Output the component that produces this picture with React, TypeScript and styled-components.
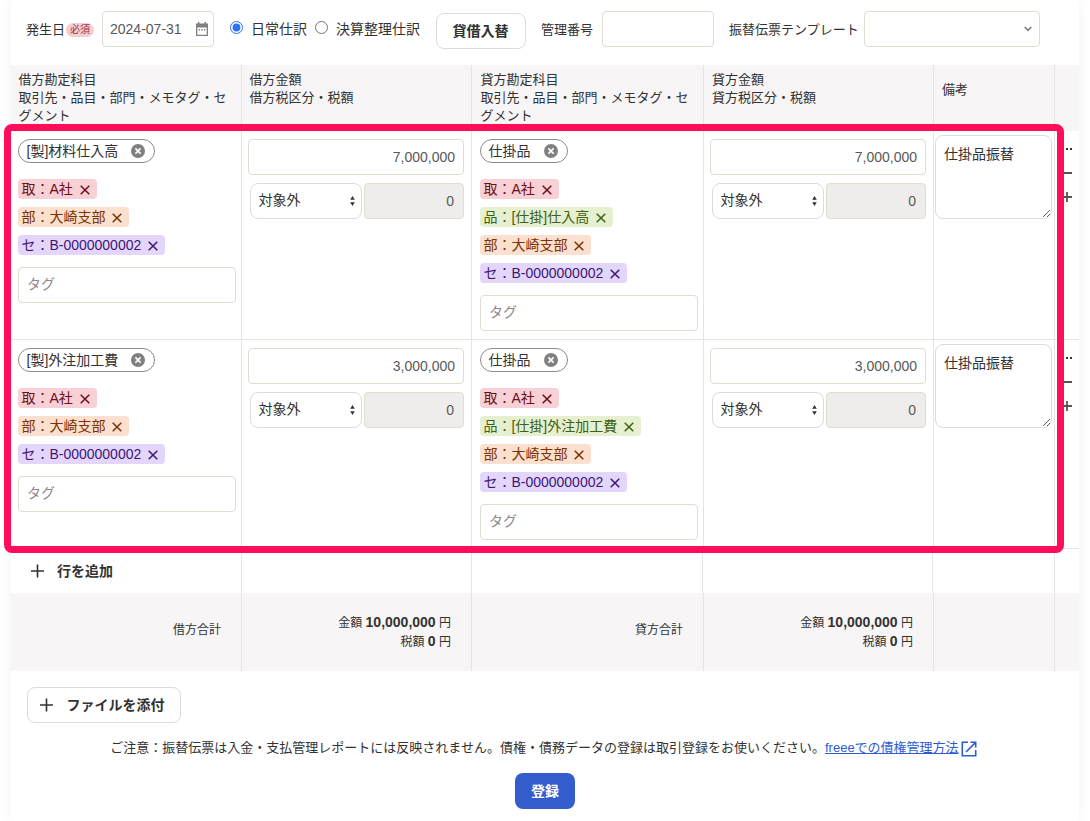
import React, { FunctionComponent, useState } from 'react';
import styled, { createGlobalStyle } from 'styled-components';

type TagKind = 'partner' | 'item' | 'section' | 'segment';
type TagData = { kind: TagKind; label: string };
type SideData = { account: string; amount: string; tags: TagData[] };
type RowData = { id: number; debit: SideData; credit: SideData; note: string };

const tagColors: Record<TagKind, { bg: string; fg: string }> = {
  partner: { bg: '#f7d1d5', fg: '#6d0f1b' },
  item: { bg: '#e6f0d1', fg: '#3f6110' },
  section: { bg: '#fce0cf', fg: '#7c3300' },
  segment: { bg: '#e4d6fb', fg: '#3b1777' },
};

const partner: TagData = { kind: 'partner', label: '取：A社' };
const section: TagData = { kind: 'section', label: '部：大崎支部' };
const segment: TagData = { kind: 'segment', label: 'セ：B-0000000002' };

const rows: RowData[] = [
  {
    id: 1,
    debit: { account: '[製]材料仕入高', amount: '7,000,000', tags: [partner, section, segment] },
    credit: {
      account: '仕掛品',
      amount: '7,000,000',
      tags: [partner, { kind: 'item', label: '品：[仕掛]仕入高' }, section, segment],
    },
    note: '仕掛品振替',
  },
  {
    id: 2,
    debit: { account: '[製]外注加工費', amount: '3,000,000', tags: [partner, section, segment] },
    credit: {
      account: '仕掛品',
      amount: '3,000,000',
      tags: [partner, { kind: 'item', label: '品：[仕掛]外注加工費' }, section, segment],
    },
    note: '仕掛品振替',
  },
];

const PlusIcon = () => (
  <svg width="14" height="14" viewBox="0 0 14 14">
    <path d="M6.5 0.5v13M0 7h13" stroke="#323232" strokeWidth="1.6" fill="none" />
  </svg>
);

const CalendarIcon = () => (
  <svg width="12" height="14" viewBox="0 0 12 14">
    <path d="M2.7 0v3M9.3 0v3" stroke="#808080" strokeWidth="1.6" />
    <path d="M0 1.5h12V14H0zM1.3 5.6v7.1h9.4V5.6z" fill="#808080" fillRule="evenodd" />
    <path d="M2.6 7.7H4M5.3 7.7h1.4M8 7.7h1.4" stroke="#808080" strokeWidth="1.4" />
  </svg>
);

const ClearIcon = () => (
  <svg width="14" height="14" viewBox="0 0 14 14">
    <circle cx="7" cy="7" r="7" fill="#808080" />
    <path d="M4.4 4.4l5.2 5.2M9.6 4.4L4.4 9.6" stroke="#fff" strokeWidth="1.6" />
  </svg>
);

const CrossIcon = () => (
  <svg width="10" height="10" viewBox="0 0 10 10">
    <path d="M0.7 0.7l8.6 8.6M9.3 0.7L0.7 9.3" stroke="currentColor" strokeWidth="1.5" />
  </svg>
);

const ChevronIcon = () => (
  <svg width="8" height="6" viewBox="0 0 8 6">
    <path d="M0.7 1l3.3 3.4L7.3 1" stroke="#808080" strokeWidth="1.7" fill="none" />
  </svg>
);

const UpDownIcon = () => (
  <svg width="5" height="10" viewBox="0 0 5 10">
    <path d="M2.5 0L4.8 3.8H0.2zM2.5 10L0.2 6.2h4.6z" fill="#323232" />
  </svg>
);

const ExternalIcon = () => (
  <svg width="16" height="16" viewBox="0 0 16 16">
    <path
      d="M7 1.3H1.3v13.4h13.4V9M9.5 1.3h5.2v5.2M14.4 1.6L5 11"
      stroke="#2f5bcf"
      strokeWidth="1.6"
      fill="none"
    />
  </svg>
);

const AccountCell: FunctionComponent<{ side: SideData; inset: number }> = ({ side, inset }) => (
  <Cell inset={inset}>
    <AccountPill>
      {side.account}
      <ClearIcon />
    </AccountPill>
    <Tags>
      {side.tags.map((tag) => (
        <Tag key={tag.label} kind={tag.kind}>
          {tag.label}
          <CrossIcon />
        </Tag>
      ))}
    </Tags>
    <TagInput placeholder="タグ" />
  </Cell>
);

const AmountCell: FunctionComponent<{ side: SideData }> = ({ side }) => (
  <Cell inset={6}>
    <AmountInput defaultValue={side.amount} />
    <TaxLine>
      <TaxSelect>
        対象外
        <UpDownIcon />
      </TaxSelect>
      <TaxAmount defaultValue="0" disabled />
    </TaxLine>
  </Cell>
);

const Total: FunctionComponent = () => (
  <TotalAmount>
    <TotalLine>金額 <b>10,000,000</b> 円</TotalLine>
    <TotalLine>税額 <b>0</b> 円</TotalLine>
  </TotalAmount>
);

const App: FunctionComponent = () => {
  const [journalType, setJournalType] = useState('daily');

  return (
    <>
      <GlobalStyle />
      <Card>
        <Toolbar>
          <Label>発生日</Label>
          <Required>必須</Required>
          <DateField>
            2024-07-31
            <CalendarIcon />
          </DateField>
          <RadioLabel>
            <Radio checked={journalType === 'daily'} onChange={() => setJournalType('daily')} />
            日常仕訳
          </RadioLabel>
          <RadioLabel>
            <Radio checked={journalType === 'closing'} onChange={() => setJournalType('closing')} />
            決算整理仕訳
          </RadioLabel>
          <SwapButton>貸借入替</SwapButton>
          <Label>管理番号</Label>
          <NumberInput />
          <Label>振替伝票テンプレート</Label>
          <TemplateSelect>
            <ChevronIcon />
          </TemplateSelect>
        </Toolbar>

        <Table>
          <HeadRow>
            <HeadCell inset={7.5}>
              借方勘定科目<br />取引先・品目・部門・メモタグ・セグメント
            </HeadCell>
            <HeadCell inset={7.5}>借方金額<br />借方税区分・税額</HeadCell>
            <HeadCell inset={8.5}>
              貸方勘定科目<br />取引先・品目・部門・メモタグ・セグメント
            </HeadCell>
            <HeadCell inset={8}>貸方金額<br />貸方税区分・税額</HeadCell>
            <HeadCell inset={8} single>備考</HeadCell>
            <HeadCell inset={0} />
          </HeadRow>

          <Entries>
            {rows.map((row) => (
              <EntryRow key={row.id}>
                <AccountCell side={row.debit} inset={7} />
                <AmountCell side={row.debit} />
                <AccountCell side={row.credit} inset={8} />
                <AmountCell side={row.credit} />
                <NoteCell>
                  <Note defaultValue={row.note} />
                </NoteCell>
                <ActionCell>
                  <svg width="12" height="60" viewBox="0 0 12 60">
                    <path d="M1 6h2M5 6h2M9 6h2" stroke="#323232" strokeWidth="2" />
                    <path d="M1 30h10M1 54h10M6 49v10" stroke="#555" strokeWidth="1.8" />
                  </svg>
                </ActionCell>
              </EntryRow>
            ))}
            <Highlight />
          </Entries>

          <AddRow>
            <AddCell>
              <AddButton>
                <PlusIcon />
                行を追加
              </AddButton>
            </AddCell>
            <AddCell />
            <AddCell />
            <AddCell />
            <AddCell />
            <AddCell />
          </AddRow>

          <TotalRow>
            <TotalCell>借方合計</TotalCell>
            <TotalCell><Total /></TotalCell>
            <TotalCell>貸方合計</TotalCell>
            <TotalCell><Total /></TotalCell>
            <TotalCell />
            <TotalCell />
          </TotalRow>
        </Table>

        <AttachButton>
          <PlusIcon />
          ファイルを添付
        </AttachButton>
        <Notice>
          ご注意：振替伝票は入金・支払管理レポートには反映されません。債権・債務データの登録は取引登録をお使いください。
          <HelpLink href="#">freeeでの債権管理方法</HelpLink>
          <ExternalIcon />
        </Notice>
        <SubmitButton>登録</SubmitButton>
      </Card>
    </>
  );
};

const GlobalStyle = createGlobalStyle`
  * {
    box-sizing: border-box;
  }
  body {
    margin: 0;
    background: #fff;
    color: #323232;
    overflow: hidden;
  }
  body, button, input, textarea {
    font-family: 'Liberation Sans', 'Noto Sans CJK JP', sans-serif;
  }
  svg {
    display: block;
    flex: none;
  }
`;

const Card = styled.div`
  width: 1068px;
  height: 821px;
  margin-left: 11px;
  background: #fff;
  box-shadow: 0 0 12px rgba(0, 0, 0, 0.05);
`;

const Toolbar = styled.div`
  display: flex;
  align-items: flex-start;
  height: 65px;
  padding: 11px 0 0 15px;
`;

const Label = styled.span`
  font-size: 13px;
  line-height: 37px;
  white-space: nowrap;
`;

const Required = styled.span`
  width: 28px;
  height: 14px;
  margin: 12px 8px 0 1px;
  border-radius: 7px;
  background: #f7cdd2;
  color: #8f3a48;
  font-size: 10px;
  line-height: 13px;
  text-align: center;
`;

const Field = styled.div`
  display: flex;
  align-items: center;
  justify-content: space-between;
  height: 36px;
  border: 1px solid #e0ddd3;
  border-radius: 4px;
  background: #fff;
`;

const DateField = styled(Field)`
  width: 112px;
  margin-right: 16px;
  padding: 0 5px 0 7px;
  color: #595959;
  font-size: 14px;
`;

const RadioLabel = styled.label`
  display: flex;
  align-items: flex-start;
  margin-right: 8px;
  font-size: 14px;
  line-height: 36px;
  white-space: nowrap;
`;

const Radio = styled.input.attrs({ type: 'radio' })`
  width: 13px;
  height: 13px;
  margin: 10px 8px 0 0;
  accent-color: #2b74ff;
`;

const Button = styled.button`
  display: flex;
  align-items: center;
  justify-content: center;
  height: 36px;
  padding: 0 0 2px;
  border: 1px solid #dcdcdc;
  border-radius: 8px;
  background: #fff;
  color: #323232;
  font-size: 14px;
  font-weight: bold;
  svg {
    margin-top: 1px;
  }
`;

const SwapButton = styled(Button)`
  width: 90px;
  margin: 2px 15px 0 8px;
  padding-right: 1px;
`;

const textInput = `
  display: block;
  height: 36px;
  border: 1px solid #e0ddd3;
  border-radius: 4px;
  background: #fff;
  color: #595959;
  font-size: 14px;
  outline: none;
`;

const NumberInput = styled.input`
  ${textInput}
  width: 112px;
  margin: 0 15px 0 9px;
`;

const TemplateSelect = styled(Field)`
  width: 176px;
  margin-left: 5px;
  padding-right: 7px;
  justify-content: flex-end;
`;

const Table = styled.div`
  height: 606px;
`;

const Row = styled.div`
  display: grid;
  grid-template-columns: 231px 230px 232px 230px 121px 24px;
  > * {
    border-right: 1px solid #e4e4e4;
  }
  > :last-child {
    border-right: none;
  }
`;

const HeadRow = styled(Row)`
  height: 66px;
  background: #f7f5f6;
`;

const HeadCell = styled.div<{ inset: number; single?: boolean }>`
  padding: ${({ single }) => (single ? '16px' : '6px')} 8px 0 ${({ inset }) => inset}px;
  font-size: 13px;
  line-height: 18px;
`;

const Entries = styled.div`
  position: relative;
`;

/* Frame drawn over the entry rows and slightly outside of them */
const Highlight = styled.div`
  position: absolute;
  top: -7px;
  left: -7px;
  width: 1060px;
  height: 429px;
  border: 7px solid #ff0c5b;
  border-radius: 8px;
  pointer-events: none;
`;

const EntryRow = styled(Row)`
  height: 209px;
  border-bottom: 1px solid #e4e4e4;
`;

const Cell = styled.div<{ inset: number }>`
  padding: 8px 0 0 ${({ inset }) => inset}px;
`;

const AccountPill = styled.div`
  display: inline-flex;
  align-items: center;
  gap: 13px;
  height: 24px;
  padding: 0 9px 0 7.5px;
  border: 1px solid #8c8989;
  border-radius: 12px;
  font-size: 14px;
  line-height: 22px;
  vertical-align: top;
`;

const Tags = styled.div`
  display: flex;
  flex-direction: column;
  align-items: flex-start;
  gap: 8px;
  margin: 16px 0 12px;
`;

const Tag = styled.span<{ kind: TagKind }>`
  display: flex;
  align-items: center;
  gap: 7px;
  height: 20px;
  padding: 0 7px 0 3.4px;
  border-radius: 4px;
  background: ${({ kind }) => tagColors[kind].bg};
  color: ${({ kind }) => tagColors[kind].fg};
  font-size: 14px;
  line-height: 20px;
  svg {
    margin-top: 2px;
  }
`;

const TagInput = styled.input`
  ${textInput}
  width: 218px;
  padding: 0 8px 2px;
  &::placeholder {
    color: #8c8989;
  }
`;

const AmountInput = styled.input`
  ${textInput}
  width: 216px;
  padding: 0 8px;
  text-align: right;
`;

const TaxLine = styled.div`
  display: flex;
  gap: 2px;
  margin: 8px 0 0 2px;
`;

const TaxSelect = styled.div`
  display: flex;
  align-items: center;
  justify-content: space-between;
  width: 112px;
  height: 36px;
  padding: 0 6px 4px 7.5px;
  border: 1px solid #dcdcdc;
  border-radius: 8px;
  font-size: 14px;
  svg {
    margin-top: 4px;
  }
`;

const TaxAmount = styled.input`
  ${textInput}
  width: 100px;
  padding: 0 9px;
  background: #efedec;
  text-align: right;
`;

const NoteCell = styled.div`
  padding: 4px 0 0 1px;
`;

const Note = styled.textarea`
  display: block;
  width: 117px;
  height: 84px;
  padding: 8px;
  border: 1px solid #dcdcdc;
  border-radius: 8px;
  color: #323232;
  font-size: 14px;
  line-height: 21px;
  outline: none;
`;

const ActionCell = styled.div`
  padding: 12px 0 0 6px;
`;

const AddRow = styled(Row)`
  grid-template-columns: 231px 230px 231px 230px 122px 24px;
  height: 44px;
`;

const AddCell = styled.div`
  display: flex;
  align-items: center;
`;

const AddButton = styled(Button)`
  gap: 12px;
  margin-left: 20px;
  border: none;
`;

const TotalRow = styled(Row)`
  height: 78px;
  background: #f7f5f6;
`;

const TotalCell = styled.div`
  display: flex;
  align-items: center;
  justify-content: flex-end;
  padding: 0 20px 7px 0;
  font-size: 12px;
`;

const TotalAmount = styled.div`
  margin-top: 6px;
`;

const TotalLine = styled.div`
  height: 19px;
  line-height: 19px;
  text-align: right;
  b {
    font-size: 14px;
  }
`;

const AttachButton = styled(Button)`
  gap: 13px;
  width: 154px;
  margin: 16px 0 0 16px;
  padding-right: 4px;
`;

const Notice = styled.div`
  display: flex;
  justify-content: center;
  height: 26px;
  margin-top: 15px;
  padding-right: 3px;
  font-size: 13px;
  line-height: 20px;
  white-space: nowrap;
  svg {
    margin: 3px 0 0 2px;
  }
`;

const HelpLink = styled.a`
  color: #2f5bcf;
`;

const SubmitButton = styled(Button)`
  width: 60px;
  margin: 9px auto 0;
  border: none;
  background: #335ccc;
  color: #fff;
`;

export default App;
